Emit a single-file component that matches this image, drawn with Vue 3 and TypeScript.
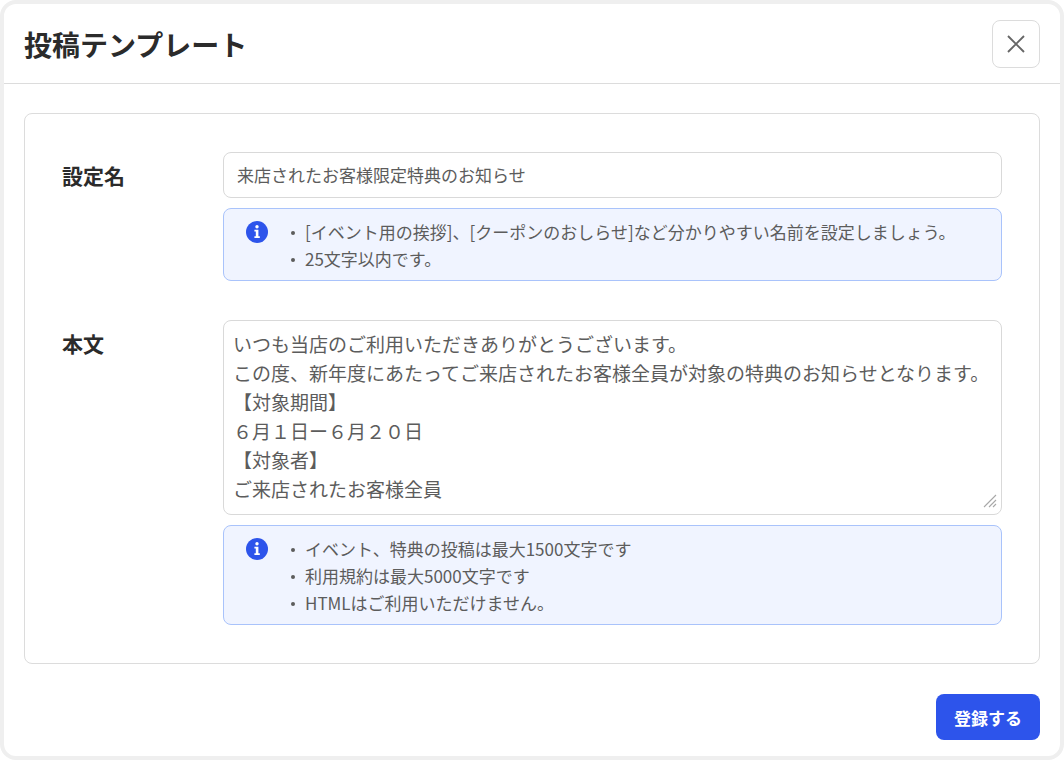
<script setup lang="ts">
import { ref } from 'vue'

const title = ref<string>('来店されたお客様限定特典のお知らせ')
const body = ref<string>(
  [
    'いつも当店のご利用いただきありがとうございます。',
    'この度、新年度にあたってご来店されたお客様全員が対象の特典のお知らせとなります。',
    '【対象期間】',
    '６月１日ー６月２０日',
    '【対象者】',
    'ご来店されたお客様全員',
  ].join('\n'),
)

const titleNotes: string[] = [
  '[イベント用の挨拶]、[クーポンのおしらせ]など分かりやすい名前を設定しましょう。',
  '25文字以内です。',
]
const bodyNotes: string[] = [
  'イベント、特典の投稿は最大1500文字です',
  '利用規約は最大5000文字です',
  'HTMLはご利用いただけません。',
]
</script>

<template>
  <section class="dialog" role="dialog" aria-labelledby="dialog-title">
    <header class="header">
      <h1 id="dialog-title">投稿テンプレート</h1>
      <button type="button" class="close" aria-label="閉じる">
        <svg viewBox="0 0 18 18" width="18" height="18" aria-hidden="true">
          <path d="M1 1 17 17M17 1 1 17" fill="none" stroke="#666" stroke-width="1.9" />
        </svg>
      </button>
    </header>

    <form class="content" @submit.prevent>
      <div class="card">
        <div class="row">
          <label for="template-name">設定名</label>
          <div class="field">
            <input id="template-name" v-model="title" type="text" />
            <div class="note">
              <svg class="info" viewBox="0 0 22 22" width="22" height="22" aria-hidden="true">
                <circle cx="11" cy="11" r="11" fill="#2d54eb" />
                <circle cx="11" cy="5.8" r="1.7" fill="#fff" />
                <path d="M8.4 8.8H12.4V15.3H13.8V17H8.4V15.3H9.8V10.4H8.4Z" fill="#fff" />
              </svg>
              <ul>
                <li v-for="note in titleNotes" :key="note">{{ note }}</li>
              </ul>
            </div>
          </div>
        </div>

        <div class="row">
          <label for="template-body">本文</label>
          <div class="field">
            <div class="area">
              <textarea id="template-body" v-model="body" rows="6"></textarea>
              <svg class="grip" viewBox="0 0 14 14" width="14" height="14" aria-hidden="true">
                <path d="M1 13 13 1M6 13 13 6M10 13 13 10" fill="none" stroke="#a8a8a8" stroke-width="1.1" />
              </svg>
            </div>
            <div class="note">
              <svg class="info" viewBox="0 0 22 22" width="22" height="22" aria-hidden="true">
                <circle cx="11" cy="11" r="11" fill="#2d54eb" />
                <circle cx="11" cy="5.8" r="1.7" fill="#fff" />
                <path d="M8.4 8.8H12.4V15.3H13.8V17H8.4V15.3H9.8V10.4H8.4Z" fill="#fff" />
              </svg>
              <ul>
                <li v-for="note in bodyNotes" :key="note">{{ note }}</li>
              </ul>
            </div>
          </div>
        </div>
      </div>

      <div class="actions">
        <button type="submit" class="submit">登録する</button>
      </div>
    </form>
  </section>
</template>

<style>
body {
  margin: 0;
  background: #fff;
}
</style>

<style scoped>
.dialog,
.dialog * {
  box-sizing: border-box;
}

.dialog {
  min-height: 100vh;
  border: 4px solid #efefef;
  border-radius: 16px;
  background: #fff;
  color: #2b2b2b;
  font-family: 'Noto Sans CJK JP', sans-serif;
}

button,
input,
textarea {
  margin: 0;
  font-family: inherit;
}

.header {
  display: flex;
  align-items: center;
  justify-content: space-between;
  padding: 16px 20px 15px;
  border-bottom: 1px solid #dcdcdc;
}

h1 {
  margin: 0;
  font-size: 28px;
  line-height: 40px;
  font-weight: 700;
}

.close {
  display: grid;
  place-items: center;
  width: 48px;
  height: 48px;
  padding: 0;
  border: 1px solid #dcdcdc;
  border-radius: 8px;
  background: #fff;
  cursor: pointer;
}

.content {
  padding: 29px 20px 16px;
}

.card {
  display: grid;
  gap: 39px;
  padding: 38px 37px;
  border: 1px solid #dcdcdc;
  border-radius: 8px;
}

.row {
  display: grid;
  grid-template-columns: 161px minmax(0, 1fr);
}

label {
  padding-top: 8px;
  font-size: 21px;
  line-height: 30px;
  font-weight: 700;
}

.field {
  display: grid;
  gap: 10px;
}

input,
textarea {
  display: block;
  width: 100%;
  border: 1px solid #d9d9d9;
  border-radius: 8px;
  background: #fff;
  color: #5c5c5c;
  outline: none;
}

input {
  height: 46px;
  padding: 0 13px 2px;
  font-size: 17px;
}

.area {
  position: relative;
}

textarea {
  height: 195px;
  padding: 8px 4px 8px 9px;
  font-size: 19px;
  line-height: 29px;
  overflow: hidden;
  resize: vertical;
}

textarea::-webkit-resizer {
  background: transparent;
}

.grip {
  position: absolute;
  right: 5px;
  bottom: 7px;
  pointer-events: none;
}

.note {
  display: flex;
  align-items: flex-start;
  gap: 23px;
  padding: 9px 22px 8px;
  border: 1px solid #a9c3fb;
  border-radius: 8px;
  background: #f0f4ff;
  color: #5c5c5c;
}

.info {
  flex: none;
  margin-top: 3px;
}

ul {
  margin: 0;
  padding: 0;
  list-style: none;
}

li {
  display: flex;
  align-items: center;
  gap: 10px;
  font-size: 17px;
  line-height: 27px;
}

li::before {
  content: '';
  flex: none;
  width: 4px;
  height: 4px;
  margin-top: 2px;
  border-radius: 50%;
  background: #5c5c5c;
}

.actions {
  display: flex;
  justify-content: flex-end;
  padding-top: 30px;
}

.submit {
  height: 46px;
  padding: 0 18px;
  border: 0;
  border-radius: 8px;
  background: #2d54eb;
  color: #fff;
  font-size: 17px;
  font-weight: 700;
  cursor: pointer;
}
</style>
